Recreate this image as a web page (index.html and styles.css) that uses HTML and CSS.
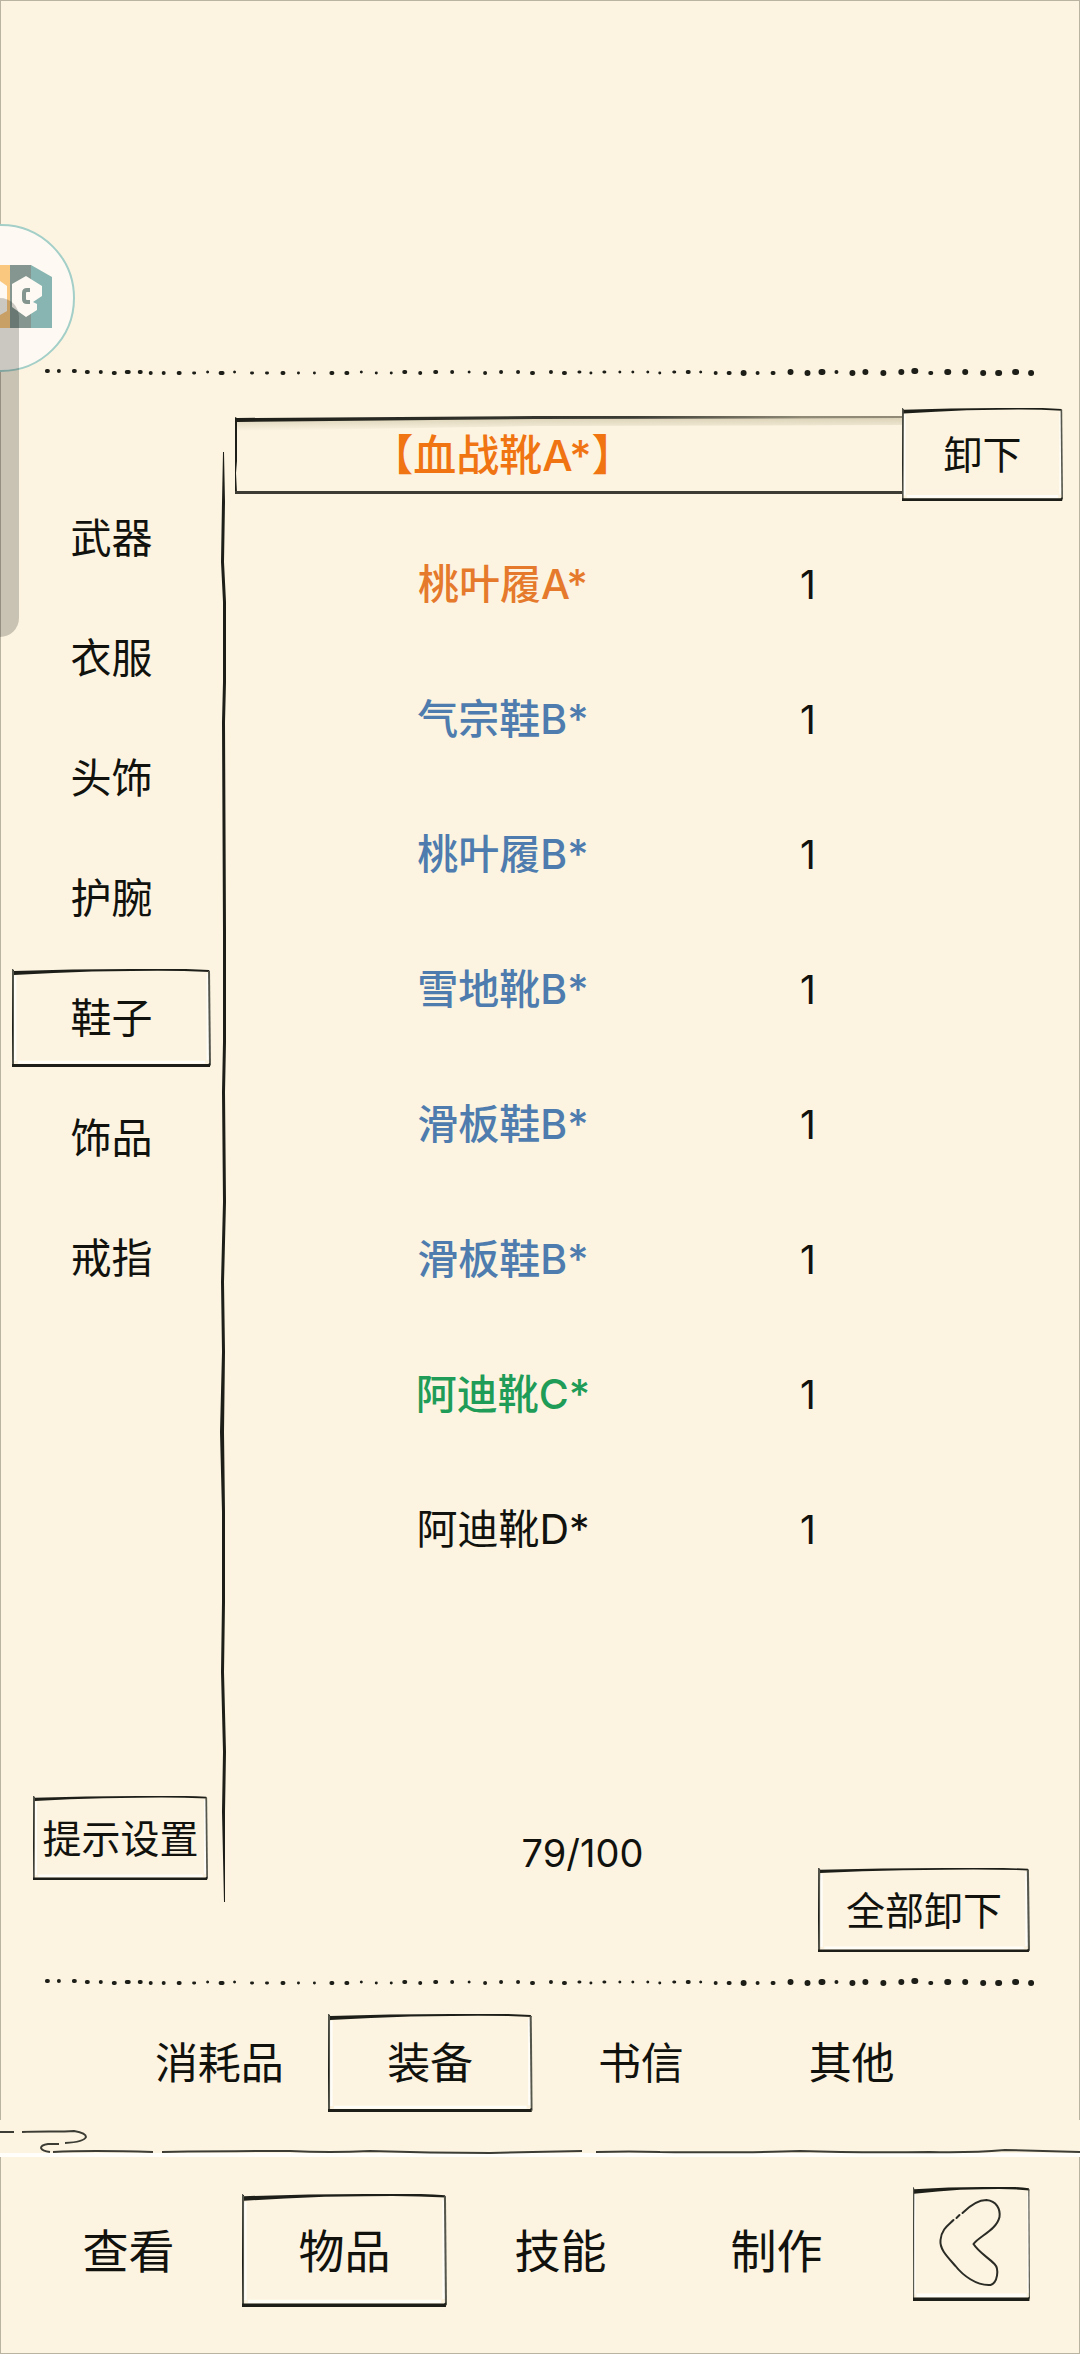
FILE: index.html
```html
<!DOCTYPE html>
<html lang="zh-CN">
<head>
    <meta charset="UTF-8">
    <meta name="viewport" content="width=device-width, initial-scale=1.0">
    <title>物品 - 装备</title>
    <link rel="stylesheet" href="styles.css">
</head>
<body>
    <!-- Shared hand-drawn shapes -->
    <svg class="shapes" aria-hidden="true">
        <symbol id="frame" viewBox="0 0 200 100" preserveAspectRatio="none">
            <path d="M3 7V94M197 5V93M6 95H194" stroke="#fffdf8" stroke-width="3" fill="none"/>
            <path d="M0 0L2 1L2 2Q60 0 120 0Q165 -1 198 1L199 3Q160 1 120 2Q80 2 42 4L2 6L1 99L0 98Z" fill="#1d1e18"/>
            <path d="M0 0L2 2L2 98L0 98L1 60Z" fill="#55564c"/>
            <path d="M197 2H199L200 99L198 97Z" fill="#55564c"/>
            <path d="M0 97H197L199 96V100H0Z" fill="#1d1e18"/>
        </symbol>
        <symbol id="dots" viewBox="0 0 1080 10">
            <g fill="none" stroke="#1d1e18" stroke-linecap="round">
                <path stroke-width="4" d="M46 4h1M58 4h0M73 4h1M86 5h1M100 5h0M113 6h1M126 5h2M139 5h1M150 6h0M163 6h0M178 6h1M220 6h2M282 6h1M331 6h1M346 6h1M404 5h1M420 6h0M435 5h1M452 5h0M485 6h0M501 5h0M518 5h0M532 6h1M551 5h0M564 6h1"/>
                <path stroke-width="3" d="M193 6h1M207 5h0M234 5h0M251 6h1M266 6h1M298 6h0M314 6h0M361 5h0M376 6h0M391 6h0M469 5h0M579 5h1M591 6h0M604 5h1M620 5h0M633 5h0M648 5h0M660 6h0M674 5h1M701 5h0"/>
                <path stroke-width="4" d="M688 5h1M716 6h0M729 6h1M758 6h0M773 6h1M837 5h0M931 6h1"/>
                <path stroke-width="6" d="M744 6h0M791 5h0M808 6h0M822 5h1M853 6h0M866 5h0M884 6h0M902 5h0M915 4h1M948 5h1M966 5h0M984 6h0M999 6h1M1016 5h1M1032 6h0"/>
            </g>
        </symbol>
    </svg>

    <div class="screen">
        <main class="panel">
            <svg class="dots"><use href="#dots"/></svg>

            <div class="inventory">
                <nav class="sidebar">
                    <button type="button">武器</button>
                    <button type="button">衣服</button>
                    <button type="button">头饰</button>
                    <button type="button">护腕</button>
                    <button type="button" class="active"><svg class="frame"><use href="#frame"/></svg>鞋子</button>
                    <button type="button">饰品</button>
                    <button type="button">戒指</button>
                    <button type="button" class="settings"><svg class="frame"><use href="#frame"/></svg>提示设置</button>
                </nav>

                <svg class="divider" viewBox="0 0 10 1450" preserveAspectRatio="none">
                    <path d="M4 0L3 50L2 110L4 150L4 230L3 270L4 480L4 590L3 640L4 750L2 830L3 900L1 980L3 1060L3 1150L2 1220L4 1300L3 1360L5 1450L6 1450L6 1360L7 1300L5 1220L6 1150L6 1060L5 980L6 900L5 830L7 750L6 640L7 590L7 480L6 270L7 230L7 150L5 110L6 50L5 0Z" fill="#1d1e18"/>
                </svg>

                <section class="items">
                    <div class="equipped">
                        <div class="equipped-name">
                            <svg class="frame" viewBox="0 0 666 76" preserveAspectRatio="none">
                                <defs>
                                    <linearGradient id="ink">
                                        <stop offset="0" stop-color="#1d1e18"/>
                                        <stop offset="0.6" stop-color="#3c3c34"/>
                                        <stop offset="0.85" stop-color="#8f8976"/>
                                    </linearGradient>
                                    <linearGradient id="shade" x2="0" y2="1">
                                        <stop offset="0" stop-color="#d9d0b5"/>
                                        <stop offset="1" stop-color="#fcf4e1"/>
                                    </linearGradient>
                                </defs>
                                <path d="M2 3L300 0H666V8L300 9L2 14Z" fill="url(#shade)"/>
                                <path d="M0 0L2 1L300 -1L666 -1V1L300 2L2 5L2 44L1 56L2 76L0 76Z" fill="url(#ink)"/>
                                <path d="M0 74H666V77H0Z" fill="#3c3c34"/>
                            </svg>
                            【血战靴A*】
                        </div>
                        <button type="button" class="unequip"><svg class="frame"><use href="#frame"/></svg>卸下</button>
                    </div>

                    <table>
                        <tbody>
                            <tr><td class="name rank-a">桃叶履A*</td><td class="count">1</td><td></td></tr>
                            <tr><td class="name rank-b">气宗鞋B*</td><td class="count">1</td><td></td></tr>
                            <tr><td class="name rank-b">桃叶履B*</td><td class="count">1</td><td></td></tr>
                            <tr><td class="name rank-b">雪地靴B*</td><td class="count">1</td><td></td></tr>
                            <tr><td class="name rank-b">滑板鞋B*</td><td class="count">1</td><td></td></tr>
                            <tr><td class="name rank-b">滑板鞋B*</td><td class="count">1</td><td></td></tr>
                            <tr><td class="name rank-c">阿迪靴C*</td><td class="count">1</td><td></td></tr>
                            <tr><td class="name">阿迪靴D*</td><td class="count">1</td><td></td></tr>
                        </tbody>
                    </table>

                    <div class="items-footer">
                        <p class="capacity">79/100</p>
                        <button type="button" class="unequip-all"><svg class="frame"><use href="#frame"/></svg>全部卸下</button>
                    </div>
                </section>
            </div>

            <svg class="dots"><use href="#dots"/></svg>

            <nav class="tabs">
                <button type="button">消耗品</button>
                <button type="button" class="active"><svg class="frame"><use href="#frame"/></svg>装备</button>
                <button type="button">书信</button>
                <button type="button">其他</button>
            </nav>
        </main>

        <svg class="cloud" viewBox="0 0 1080 37" aria-hidden="true">
            <path d="M0 33H1080V37H0Z" fill="#fffefa"/>
            <path d="M0 12H14M22 12C40 11 60 12 74 11Q86 13 86 17Q84 22 65 23M59 24L48 24Q41 25 41 28Q42 31 50 32M53 32Q90 30 153 32M162 32Q240 31 290 31Q330 33 370 31Q430 33 490 33Q540 32 582 31M596 32Q630 31 660 32Q750 33 800 31Q860 33 930 32Q970 33 1005 30Q1040 31 1080 32" fill="none" stroke="#3c3c34" stroke-width="2"/>
        </svg>

        <footer class="bottom-bar">
            <nav class="menu">
                <button type="button">查看</button>
                <button type="button" class="active"><svg class="frame"><use href="#frame"/></svg>物品</button>
                <button type="button">技能</button>
                <button type="button">制作</button>
            </nav>
            <button type="button" class="back" aria-label="返回">
                <svg class="frame"><use href="#frame"/></svg>
                <svg class="arrow" viewBox="0 0 116 114">
                    <path d="M49 26C57 18 64 13 73 13C83 14 87 22 86 30C83 43 66 49 60 57C65 65 74 70 81 77C86 82 84 96 77 98C63 99 49 88 42 79C33 69 26 62 27 53C28 42 35 38 40 33M43 31L46 28" fill="none" stroke="#2b2c26" stroke-width="2" stroke-linecap="round"/>
                </svg>
            </button>
        </footer>

        <!-- Floating assist ball and edge handle -->
        <svg class="float-ball" viewBox="0 0 76 150" aria-hidden="true">
            <circle cx="1" cy="75" r="73" fill="#fefaf3" stroke="#a3cfc8" stroke-width="2"/>
            <path d="M0 42H10V105H0Z" fill="#fac87f"/>
            <path d="M10 42H31V105H10Z" fill="#84968f"/>
            <path d="M31 42L52 54V105H31Z" fill="#88b5b1"/>
            <path d="M0 58L7 63V88L0 92Z" fill="#fefaf3"/>
            <path d="M26 53L42 63V73L33 79L37 81V87L26 94L12 84V61Z" fill="#fefaf3"/>
            <path d="M30 67H27Q24 67 24 70V76Q24 79 27 79H30" fill="none" stroke="#84968f" stroke-width="4"/>
        </svg>
        <div class="edge-handle"></div>
    </div>
</body>
</html>
```
FILE: styles.css
```css
* {
    box-sizing: border-box;
}

body {
    margin: 0;
    background-color: #fcf4e1;
    color: #11120e;
    font-family: Inter, "Noto Sans CJK SC", sans-serif;
    font-size: 41px;
    line-height: 1;
}

button {
    position: relative;
    padding: 0;
    border: none;
    background: none;
    color: inherit;
    font: inherit;
    white-space: nowrap;
    cursor: pointer;
}

.shapes {
    position: absolute;
    width: 0;
    height: 0;
}

/* sketched outline behind a button's label */
.frame {
    position: absolute;
    top: 0;
    left: 0;
    width: 100%;
    height: 100%;
    overflow: visible;
}

.screen {
    position: relative;
    display: flex;
    flex-direction: column;
    min-height: 100vh;
}

.panel {
    flex: 1;
    display: flex;
    flex-direction: column;
    padding: 366px 0 8px;
    border: 1px solid #b9b3a2;
    border-bottom: none;
}

.dots {
    display: block;
    width: 100%;
    height: 10px;
}

.inventory {
    flex: 1;
    display: grid;
    grid-template-columns: 218px 10px 1fr;
}

/* Sidebar */
.sidebar {
    display: flex;
    flex-direction: column;
    gap: 22px;
    padding: 112px 8px 97px 11px;
}

.sidebar button {
    height: 98px;
}

.sidebar .settings {
    height: 84px;
    margin: auto 3px 0 21px;
    font-size: 39px;
}

.divider {
    width: 10px;
    height: calc(100% - 150px);
    margin-top: 75px;
}

/* Item list */
.items {
    display: flex;
    flex-direction: column;
    padding: 31px 16px 25px 6px;
}

.equipped {
    display: flex;
    align-items: center;
}

.equipped-name {
    position: relative;
    flex: 1;
    height: 76px;
    padding-right: 132px;
    line-height: 76px;
    text-align: center;
    color: #f07412;
    font-size: 43px;
    font-weight: 500;
}

.unequip {
    width: 161px;
    height: 93px;
    font-size: 39px;
}

table {
    width: 100%;
    margin-top: 16px;
    border-collapse: collapse;
    table-layout: fixed;
}

td {
    height: 135px;
    padding: 0;
    text-align: center;
}

.name {
    width: 536px;
}

.count {
    width: 74px;
    font-size: 39px;
}

.rank-a {
    color: #e67a2c;
    font-weight: 500;
}

.rank-b {
    color: #4f7cae;
    font-weight: 500;
}

.rank-c {
    color: #1f9c57;
    font-weight: 500;
}

.items-footer {
    display: flex;
    flex-direction: column;
    margin-top: auto;
    padding-right: 33px;
}

.capacity {
    margin: 0 100px 0 0;
    line-height: 30px;
    text-align: center;
    font-size: 38px;
}

.unequip-all {
    align-self: flex-end;
    width: 212px;
    height: 84px;
    font-size: 39px;
}

/* Tabs */
.tabs {
    display: grid;
    grid-template-columns: repeat(4, 1fr);
    gap: 6px;
    margin-top: 27px;
    padding: 0 125px 0 116px;
    font-size: 43px;
}

.tabs button {
    height: 98px;
}

.cloud {
    display: block;
    width: 100%;
}

/* Bottom bar */
.bottom-bar {
    display: flex;
    align-items: flex-start;
    justify-content: space-between;
    padding: 30px 49px 46px 25px;
    border: 1px solid #b9b3a2;
    border-top: none;
    font-size: 46px;
}

.menu {
    flex: 1;
    display: grid;
    grid-template-columns: repeat(4, 1fr);
    gap: 11px;
    margin: 7px 34px 0 0;
}

.menu button {
    height: 113px;
}

.back {
    width: 117px;
    height: 114px;
}

.arrow {
    display: block;
    width: 100%;
    height: 100%;
}

/* Overlays */
.float-ball {
    position: absolute;
    top: 223px;
    left: 0;
    width: 76px;
    height: 150px;
}

.edge-handle {
    position: absolute;
    top: 298px;
    left: 0;
    width: 19px;
    height: 339px;
    border-radius: 0 19px 19px 0;
    background-color: rgba(0, 0, 0, 0.2);
}
```
